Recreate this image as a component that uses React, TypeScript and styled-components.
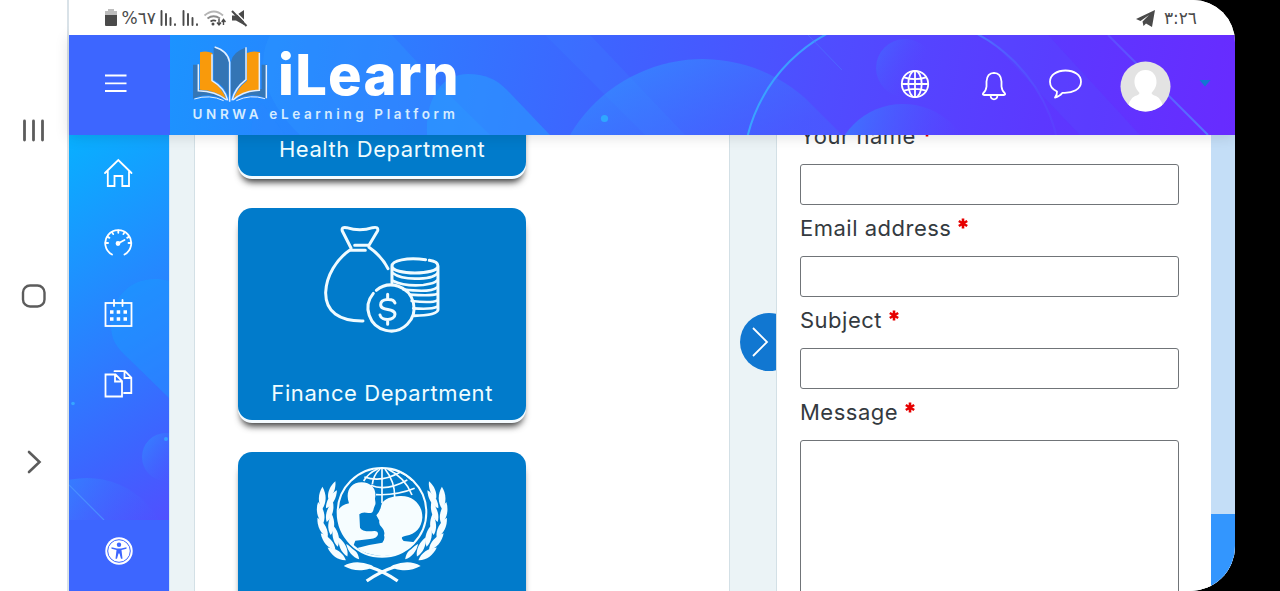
import React from "react";
import styled, { createGlobalStyle } from "styled-components";

const Global = createGlobalStyle`
  * { box-sizing: border-box; }
  html, body { margin: 0; background: #000; }
  body { font-family: Inter, "Liberation Sans", sans-serif; overflow: hidden; }
`;

const Screen = styled.div`
  display: flex;
  width: 1235px;
  height: 591px;
  background: #fff;
  border-radius: 0 42px 45px 0;
  overflow: hidden;
`;

const SystemNav = styled.nav`
  flex: 0 0 69px;
  height: 591px;
  padding-top: 118px;
  display: flex;
  flex-direction: column;
  align-items: center;
  gap: 140px;
  border-right: 2px solid #d9e2e8;
  svg { flex: none; display: block; }
`;

const Main = styled.div`
  flex: 1;
  display: flex;
  flex-direction: column;
  min-width: 0;
`;

const StatusBar = styled.div`
  position: relative;
  z-index: 3;
  background: #fff;
  flex: 0 0 35px;
  display: flex;
  justify-content: space-between;
  align-items: center;
  padding: 1px 38px 0 36px;
  color: #4a4a4a;
`;

const StatusGroup = styled.div<{ $gap: number }>`
  display: flex;
  align-items: center;
  gap: ${(p) => p.$gap}px;
  svg { display: block; }
`;

const StatusText = styled.bdo<{ $spacing?: number }>`
  font: 17px/20px "DejaVu Sans", sans-serif;
  letter-spacing: ${(p) => p.$spacing ?? 0}px;
`;

const Header = styled.header`
  flex: 0 0 100px;
  display: flex;
  position: relative;
  z-index: 2;
  box-shadow: 0 2px 14px rgba(0, 0, 0, 0.12);
`;

const MenuButton = styled.div`
  flex: 0 0 101px;
  background: #3d66ff;
  padding: 38.500px 0 0 36px;
`;

const HeaderBar = styled.div`
  flex: 1;
  position: relative;
  display: flex;
  justify-content: space-between;
  overflow: hidden;
  background: linear-gradient(100deg, #1c93ff 0%, #2f7bff 22%, #3f62ff 42%, #504cff 62%, #5c38ff 82%, #682bff 100%);
`;

const Art = styled.svg`
  position: absolute;
  inset: 0;
`;

const Brand = styled.div`
  position: relative;
  padding: 8px 0 0 21px;
  color: #fff;
`;

const BrandRow = styled.div`
  display: flex;
  height: 61px;
  svg { display: block; }
`;

const BrandName = styled.div`
  font-size: 56px;
  font-weight: 800;
  line-height: 61px;
  letter-spacing: 1.3px;
  margin: 2px 0 0 5px;
`;

const BrandTag = styled.div`
  font-size: 13.5px;
  line-height: 14px;
  font-weight: 600;
  letter-spacing: 3.62px;
  color: #d6ecff;
  margin: 3px 0 0 1.5px;
  white-space: nowrap;
`;

const Actions = styled.div`
  position: relative;
  display: flex;
  align-items: flex-start;
  padding: 25.500px 24px 0 0;
  svg { display: block; }
`;

const Action = styled.div<{ $w: number; $top?: number }>`
  width: ${(p) => p.$w}px;
  padding-top: ${(p) => p.$top ?? 0}px;
`;

const Body = styled.div`
  flex: 1;
  display: flex;
  min-height: 0;
`;

const Sidebar = styled.aside`
  flex: 0 0 101px;
  display: flex;
  flex-direction: column;
  border-right: 1px solid #cfe6f8;
`;

const SideLinks = styled.div`
  position: relative;
  height: 385px;
  background: linear-gradient(148deg, #08b0ff 0%, #1c94ff 30%, #2c7dff 54%, #3c65ff 78%, #5050ff 100%);
`;

const SideList = styled.div`
  position: relative;
  display: flex;
  flex-direction: column;
  gap: 40px;
  padding: 23px 0 0 34px;
  svg { display: block; }
`;

const Accessibility = styled.div`
  flex: 1;
  background: #3d66ff;
  padding: 17px 0 0 36px;
`;

const Content = styled.main`
  flex: 1;
  display: flex;
  min-width: 0;
  background: #ebf3f6;
  padding-left: 24px;
`;

const Departments = styled.section`
  flex: 0 0 536px;
  height: 456px;
  overflow: hidden;
  background: #fff;
  border: solid #d3e0e6;
  border-width: 0 1px;
  padding: 0 0 0 43.4px;
`;

const DepartmentList = styled.div`
  margin-top: -171px;
  display: flex;
  flex-direction: column;
  gap: 32px;
`;

const DepartmentCard = styled.div`
  flex: none;
  width: 287.5px;
  height: 212px;
  border-radius: 14px;
  background: #017bcb;
  box-shadow: 0 3px 0 #f4fbff, 0 9px 7px -3px rgba(0, 0, 0, 0.8);
  color: #f0fdff;
  display: flex;
  flex-direction: column;
  justify-content: space-between;
  align-items: center;
  svg { display: block; }
`;

const DepartmentName = styled.div`
  font-size: 22px;
  line-height: 28px;
  letter-spacing: 0.58px;
  padding-bottom: 13.500px;
  white-space: nowrap;
`;

const DepartmentIcon = styled.div<{ $top: number }>`
  padding-top: ${(p) => p.$top}px;
`;

const Gutter = styled.div`
  flex: 1;
  min-width: 0;
  padding: 178px 0 0 9.5px;
  overflow: hidden;
`;

const DrawerToggle = styled.div`
  width: 58px;
  height: 58px;
  border-radius: 50%;
  background: #1177d1;
  padding: 14px 0 0 12px;
  svg { display: block; }
`;

const ContactPanel = styled.section`
  flex: 0 0 435px;
  height: 456px;
  overflow: hidden;
  background: #fff;
  border-left: 1px solid #d3e0e6;
  padding: 0 32px 0 23px;
`;

const ContactForm = styled.form`
  margin-top: -22px;
`;

const Label = styled.label`
  display: flex;
  height: 51px;
  padding-top: 8px;
  font-size: 22px;
  line-height: 30px;
  letter-spacing: 0.5px;
  color: #343a40;
`;

const Required = styled.span`
  color: #e60000;
  padding: 5px 0 0 6.5px;
  svg { display: block; }
`;

const fieldBase = `
  display: block;
  width: 379px;
  border: 1px solid #707478;
  border-radius: 3px;
  background: #fff;
  outline: none;
  padding: 0 10px;
  resize: none;
`;
const Input = styled.input`${fieldBase} height: 41px;`;
const Textarea = styled.textarea`${fieldBase} height: 220px;`;

const ScrollTrack = styled.div`
  flex: 0 0 24px;
  background: #c4def7;
  padding-top: 379px;
`;
const ScrollThumb = styled.div`
  height: 77px;
  background: #3396fe;
`;

const HeaderArt = () => (
  <Art width="1065" height="100" viewBox="170 35 1065 100" fill="none">
    <defs>
      <linearGradient id="dome" x1="0" y1="0" x2="1" y2="0.6">
        <stop offset="0" stopColor="#2fa0ff" stopOpacity=".65" />
        <stop offset="1" stopColor="#3f70ff" stopOpacity=".3" />
      </linearGradient>
      <linearGradient id="fade" x1="0" y1="0" x2="1" y2=".6">
        <stop offset="0" stopColor="#338cff" stopOpacity=".4" />
        <stop offset=".75" stopColor="#4a5cff" stopOpacity="0" />
      </linearGradient>
      <linearGradient id="lowDome" x1="0" y1="0" x2="1" y2=".3">
        <stop offset="0" stopColor="#338cff" stopOpacity=".75" />
        <stop offset=".9" stopColor="#4a5cff" stopOpacity="0" />
      </linearGradient>
      <linearGradient id="ring" x1="743" y1="0" x2="1062" y2="0" gradientUnits="userSpaceOnUse">
        <stop offset="0" stopColor="#38a6ff" />
        <stop offset=".7" stopColor="#4a80ff" />
        <stop offset="1" stopColor="#5a48ff" stopOpacity=".3" />
      </linearGradient>
      <linearGradient id="ray" x1="1108" y1="35" x2="1208" y2="135" gradientUnits="userSpaceOnUse">
        <stop offset="0" stopColor="#5c64ff" stopOpacity=".5" />
        <stop offset="1" stopColor="#5575ff" />
      </linearGradient>
    </defs>
    <path d="M270 35 C256 62 262 98 300 135 H490 L430 76 L392 35Z" fill="#2f9bff" fillOpacity=".3" />
    <path d="M427 135 C425 98 442 74 468 74 C485 74 496 79 507 90 L550 135Z" fill="#2a9dff" fillOpacity=".55" />
    <path d="M252 135 C250 122 254 111 262 103 L285 135Z" fill="#2a86ff" fillOpacity=".4" />
    <path d="M545 35 L645 135 H685 L590 35Z" fill="#3c8cff" fillOpacity=".18" />
    <path d="M570 135 A154 154 0 0 1 805 98 L842 135Z" fill="url(#dome)" />
    <circle cx="604.5" cy="118.5" r="3.6" fill="#2fa7ff" />
    <circle cx="902" cy="174" r="159" stroke="url(#ring)" strokeWidth="2" />
    <path d="M808 35 L842 70" stroke="#4d75ff" strokeOpacity=".6" />
    <circle cx="905" cy="68" r="29" fill="url(#fade)" />
    <circle cx="903" cy="174" r="70" fill="url(#lowDome)" />
    <path d="M985 35 H1048 L1140 135 H1080Z" fill="#4e5cff" fillOpacity=".18" />
    <path d="M1108 35 L1208 135" stroke="url(#ray)" strokeWidth="2" />
  </Art>
);

const SidebarArt = () => (
  <Art width="100" height="385" viewBox="69 135 100 385" fill="none">
    <defs>
      <linearGradient id="sideFade" x1="0" y1="0" x2="1" y2=".7">
        <stop offset="0" stopColor="#3097ff" stopOpacity=".65" />
        <stop offset=".85" stopColor="#4560ff" stopOpacity="0" />
      </linearGradient>
      <linearGradient id="sideDome" x1="69" y1="478" x2="150" y2="520" gradientUnits="userSpaceOnUse">
        <stop offset="0" stopColor="#3097ff" stopOpacity=".45" />
        <stop offset="1" stopColor="#4560ff" stopOpacity=".1" />
      </linearGradient>
    </defs>
    <path d="M170 281 C135 272 111 295 111 325 C111 340 117 348 128 358 L170 399Z" fill="#18a0ff" fillOpacity=".38" />
    <circle cx="166" cy="457" r="24" fill="url(#sideFade)" />
    <circle cx="166" cy="439" r="2" fill="#379dff" />
    <circle cx="73" cy="403.500" r="1.8" fill="#36a5ff" />
    <circle cx="87" cy="560" r="82" fill="url(#sideDome)" />
    <path d="M69 485 L104 520" stroke="#4c95ff" strokeWidth="1.2" strokeOpacity=".8" />
  </Art>
);

const BookLogo = () => (
  <svg width="82" height="61" viewBox="34 22 246 183">
    <path d="M40 87 H58 V160 Q100 165 132 190 Q80 168 40 190Z" fill="#3576b5" />
    <path d="M262 87 H246 V160 Q205 165 170 190 Q222 168 262 190Z" fill="#3576b5" />
    <path d="M61 50 Q80 44 98 52 V135 Q128 158 140 190 Q108 164 61 162Z" fill="#f99a0b" />
    <path d="M241 50 Q220 44 202 52 V135 Q172 158 161 190 Q194 164 241 162Z" fill="#f99a0b" />
    <path d="M102 35 Q143 50 147 78 V185 Q135 150 102 132Z" fill="#3475b5" />
    <path d="M200 35 Q158 50 154 78 V185 Q166 150 200 132Z" fill="#3475b5" />
    <g fill="none" stroke="#e3efff" strokeWidth="4.500">
      <path d="M56 86 V165 Q108 166 141 193" />
      <path d="M260 88 V188" />
      <path d="M239 52 V164 Q190 166 160 193" />
      <path d="M97 56 V135 Q135 157 144 194" />
      <path d="M105 34 Q145 46 150 80 V198" />
      <path d="M199 35 V132 Q166 157 157 194" />
      <path d="M44 190 Q90 175 132 195 M256 189 Q212 175 170 195" strokeWidth="3" />
    </g>
  </svg>
);

const MoneyIcon = () => (
  <svg width="123.300" height="116.700" viewBox="270 270 370 350" fill="none" stroke="#f0fbff" strokeWidth="9" strokeLinecap="round" strokeLinejoin="round">
    <path d="M363 354 L337 303 Q333 290 350 293 Q390 306 428 293 Q446 289 443 302 L417 346 H374 M363 361 H406 M417 352 Q456 379 474 416" />
    <path d="M360 360 C320 387 289 437 287 487 C286 545 328 574 399 573" />
    <path d="M439 481 A69 69 0 1 1 430 490" />
    <path d="M495 519 C490 504 452 505 452 524 C452 545 495 532 495 553 C495 573 454 573 450 555 M473 493 V505 M473 571 V583" />
    <path d="M587 389 C530 382 486 391 486 408 C486 436 624 436 624 408 C624 398 612 393 598 391 M486 408 V458 M624 408 V540 Q620 556 553 557" />
    <path d="M488 429 Q510 446 555 446 Q610 446 622 430 M488 452 Q525 470 580 465 Q615 461 622 451 M520 478 Q600 489 622 472 M540 494 Q606 498 622 492 M545 513 Q606 520 622 511 M550 535 Q606 539 622 530" strokeWidth="8" />
  </svg>
);

const leafPath = "M0 -35 C13 -14 14 14 0 32 C-14 14 -13 -14 0 -35Z";
const leafAngles = [-13, 1, 15, 29, 43];
const LaurelHalf = () => (
  <g>
    <path d={leafPath} transform="translate(80 106) rotate(22) scale(.75 .85)" />
    {leafAngles.map((a) => {
      const t = (a * Math.PI) / 180;
      const s = ((a - 1) * Math.PI) / 180;
      return (
        <React.Fragment key={a}>
          <path d={leafPath} transform={`translate(${231 - 184 * Math.cos(t)} ${172 + 184 * Math.sin(t)}) rotate(${-a - 12})`} />
          <path d={leafPath} transform={`translate(${231 - 157 * Math.cos(s)} ${172 + 157 * Math.sin(s)}) rotate(${-a + 18}) scale(.88 .95)`} />
        </React.Fragment>
      );
    })}
    <path d={leafPath} transform="translate(144 291) rotate(-40) scale(.8 .9)" />
    <path d="M116 333 Q150 312 198 330 Q218 338 176 345 Q145 349 116 333Z" />
    <path d="M185 378 Q225 350 268 336" fill="none" stroke="#f6fdff" strokeWidth="10" />
  </g>
);

const EmblemIcon = () => (
  <svg width="155" height="136" viewBox="0 0 465 408" fill="#f6fdff">
    <LaurelHalf />
    <g transform="translate(463 0) scale(-1 1)"><LaurelHalf /></g>
    <circle cx="231" cy="172" r="141" fill="#017bcb" />
    <circle cx="231" cy="172" r="133" fill="none" stroke="#f6fdff" strokeWidth="6" />
    <g fill="none" stroke="#f6fdff" strokeWidth="5">
      <path d="M231 40 V145 M218 42 Q190 54 176 78 M225 42 Q205 60 202 88 M240 42 Q270 80 269 126 M248 42 Q300 67 321 120 M253 42 Q290 46 322 76" />
      <path d="M178 66 Q230 84 285 52 M197 91 Q245 110 307 75 M213 119 Q275 122 329 100" />
    </g>
    <path d="M132 145 C120 112 135 82 170 82 C201 82 216 105 210 130 C210 140 214 145 209 153 C203 165 208 176 190 174 Q172 169 163 178 L165 218 Q170 230 200 229 Q220 225 219 238 Q217 250 195 252 L151 257 L145 272 Q98 235 97 170 Q105 151 132 145Z" />
    <path d="M229 150 C236 129 263 124 285 123 C326 121 353 151 352 188 C350 218 331 238 303 242 Q282 245 296 258 L331 262 Q292 308 222 302 Q175 296 157 279 Q194 268 232 263 Q241 254 237 241 Q241 229 232 219 Q220 210 223 197 L214 181 Q226 168 229 150Z" />
  </svg>
);

const lineIcon = { fill: "none", stroke: "#fff", strokeWidth: 1.8, strokeLinecap: "round" as const, strokeLinejoin: "round" as const };

const Star = () => (
  <Required>
    <svg width="10" height="11" viewBox="0 0 10 11" stroke="currentColor" strokeWidth="2.600">
      <path d="M5 .5V10.500M.8 3L9.200 8M9.200 3L.8 8" />
    </svg>
  </Required>
);

const Signal = () => (
  <svg width="17" height="16" viewBox="0 0 17 16" stroke="currentColor" strokeWidth="1.900" strokeLinecap="round">
    <path d="M1.500 1V15M6 4V15M10.500 8V15M15 14.300V15" />
  </svg>
);

const ticks = [-180, -150, -120, -90, -60, -30, 0];

const App = () => (
  <>
    <Global />
    <Screen>
      <SystemNav>
        <svg width="24" height="25" viewBox="0 0 24 25" stroke="#5c5c5c" strokeWidth="2.800" strokeLinecap="round">
          <path d="M2.500 3V22M11.500 3V22M20.500 3V22" />
        </svg>
        <svg width="26" height="26" viewBox="0 0 26 26" fill="none" stroke="#5c5c5c" strokeWidth="2.400">
          <rect x="2" y="2.500" width="21.500" height="21" rx="7" />
        </svg>
        <svg width="24" height="26" viewBox="0 0 24 26" fill="none" stroke="#5c5c5c" strokeWidth="2.600" strokeLinecap="round">
          <path d="M7 3L17.500 13L7 23" />
        </svg>
      </SystemNav>
      <Main>
        <StatusBar>
          <StatusGroup $gap={4.500}>
            <svg width="12" height="18" viewBox="0 0 12 18">
              <path d="M3 0H9V2H12V6H0V2H3Z" fill="#bdbdbd" />
              <path d="M0 6H12V16Q12 17 11 17H1Q0 17 0 16Z" fill="#4a4a4a" />
            </svg>
            <StatusText dir="ltr" $spacing={-0.2}>%٦٧</StatusText>
            <Signal />
            <Signal />
            <svg width="23" height="17" viewBox="0 0 23 17" fill="none" strokeWidth="1.800">
              <path d="M1.500 5.500Q11 -2.500 20 5.500" stroke="#b5b5b5" />
              <path d="M4.500 8.500Q10.500 4 17 8.500" stroke="#8a8a8a" />
              <path d="M7.500 11.500Q10.500 9.500 13 11" stroke="#4a4a4a" />
              <circle cx="10" cy="14" r="1.500" fill="#4a4a4a" />
              <path d="M16 9V14M14 12.500L16 15L18 12.500M20.500 15V10M18.700 12L20.500 9.500L22.500 12" stroke="#4a4a4a" strokeWidth="1.400" />
            </svg>
            <svg width="17" height="18" viewBox="0 0 17 18">
              <path d="M1 6.500H5L13 1V16L5 11.500H1Z" fill="#4a4a4a" />
              <path d="M2.500 1L16 14.500" stroke="#fff" strokeWidth="1.500" />
              <path d="M1 2L15.500 17" stroke="#4a4a4a" strokeWidth="2" />
            </svg>
          </StatusGroup>
          <StatusGroup $gap={8}>
            <svg width="20" height="17" viewBox="0 0 20 17" fill="#4a4a4a">
              <path d="M0 9L19 0L16 17L10 13.500L7.500 16L6.500 11.500L13 5L4.500 11Z" />
            </svg>
            <StatusText dir="ltr" $spacing={-1.2}>٣:٢٦</StatusText>
          </StatusGroup>
        </StatusBar>
        <Header>
          <MenuButton>
            <svg width="22" height="19" viewBox="0 0 22 19" stroke="#fff" strokeWidth="1.800">
              <path d="M0 1.500H21.500M0 9.300H21.500M0 17H21.500" />
            </svg>
          </MenuButton>
          <HeaderBar>
            <HeaderArt />
            <Brand>
              <BrandRow>
                <BookLogo />
                <BrandName>iLearn</BrandName>
              </BrandRow>
              <BrandTag>UNRWA eLearning Platform</BrandTag>
            </Brand>
            <Actions>
              <Action $w={80} $top={8.500}>
                <svg width="30" height="30" viewBox="0 0 30 30" {...lineIcon}>
                  <circle cx="15" cy="15" r="13.200" />
                  <ellipse cx="15" cy="15" rx="6.700" ry="13.200" />
                  <path d="M15 1.800V28.200M1.800 15H28.200M4 8.300Q15 12 26 8.300M4 21.700Q15 18 26 21.700" />
                </svg>
              </Action>
              <Action $w={69} $top={10.500}>
                <svg width="28" height="30" viewBox="0 0 28 30" {...lineIcon}>
                  <path d="M3 22.500Q6 20 6.500 15.500V10.500Q7 2 14 1.800Q21 2 21.500 10.500V15.500Q22 20 25 22.500Q25.500 24 24 24H4Q2.500 24 3 22.500Z" />
                  <path d="M10.500 24.500Q11 28.300 14 28.300Q17 28.300 17.500 24.500" />
                </svg>
              </Action>
              <Action $w={71} $top={7}>
                <svg width="34" height="32" viewBox="1 0 34 32" {...lineIcon}>
                  <path d="M17.500 2.500C9 2.500 2 7 2 13.800C2 18 4.500 21.500 9 23.500Q9.300 26.500 7 29.500Q11.500 28.700 14.500 24.800C25 25.500 33 21 33 13.800C33 7 26 2.500 17.500 2.500Z" />
                </svg>
              </Action>
              <Action $w={79}>
                <svg width="51" height="51" viewBox="0 0 51 51">
                  <defs><clipPath id="avatar"><circle cx="25.500" cy="25.500" r="25" /></clipPath></defs>
                  <g clipPath="url(#avatar)">
                    <rect width="51" height="51" fill="#e3e3e3" />
                    <path d="M25.500 9C33 9 37 15 36.500 22C36 27 33 30 31.500 32Q32 34 36 35Q43 38 43 51H8Q8 38 15 35Q19 34 19.500 32C18 30 15 27 14.500 22C14 15 18 9 25.500 9Z" fill="#fff" />
                  </g>
                </svg>
              </Action>
              <Action $w={12} $top={19}>
                <svg width="12" height="7" viewBox="0 0 12 7" fill="#1177d1"><path d="M.5 0H11.500L6 6.500Z" /></svg>
              </Action>
            </Actions>
          </HeaderBar>
        </Header>
        <Body>
          <Sidebar>
            <SideLinks>
              <SidebarArt />
              <SideList>
                <svg width="30" height="30" viewBox="0 0 30 30" {...lineIcon} strokeLinejoin="miter">
                  <path d="M2 15L15.300 2L28.500 15M4.800 13V28H11.500V18H19.300V28H26V13" />
                </svg>
                <svg width="30" height="31" viewBox="0 0 30 31" {...lineIcon}>
                  <path d="M9 26.500A13 13 0 1 1 21.500 26.500M16 15L21.500 12" />
                  {ticks.map((a) => <path key={a} d="M25.500 15H28" transform={`rotate(${a} 15.300 15)`} />)}
                  <circle cx="15" cy="15.500" r="1.500" fill="#fff" />
                </svg>
                <svg width="30" height="30" viewBox="0 0 30 30" {...lineIcon} strokeLinejoin="miter">
                  <rect x="2.500" y="4" width="26" height="23" />
                  <path d="M11 1V7M19.500 1V7" />
                  <path d="M7 13H10.500M13.700 13H17.200M20.500 13H24M7 20H10.500M13.700 20H17.200M20.500 20H24" strokeWidth="3.500" strokeLinecap="butt" />
                </svg>
                <svg width="30" height="30" viewBox="0 0 30 30" {...lineIcon} strokeLinejoin="miter">
                  <path d="M2.500 5.500H12.500L19 12V27.500H2.500ZM12 5.500V12.500H19M11.500 2.200H22L28.300 8.500V24H21M21.500 2.500V9H28" />
                </svg>
              </SideList>
            </SideLinks>
            <Accessibility>
              <svg width="28" height="28" viewBox="0 0 28 28">
                <circle cx="14" cy="14" r="13.700" fill="#fff" />
                <circle cx="14" cy="14" r="11.300" fill="none" stroke="#3d66ff" />
                <circle cx="14" cy="7.700" r="2.200" fill="#3d66ff" />
                <path d="M6.500 10.300L12 11.500H16L21.500 10.300V11.700L16.500 13L17.500 21.700H16L14.500 16.500H13.500L12 21.700H10.500L11.500 13L6.500 11.700Z" fill="#3d66ff" />
              </svg>
            </Accessibility>
          </Sidebar>
          <Content>
            <Departments>
              <DepartmentList>
                <DepartmentCard>
                  <DepartmentIcon $top={0} />
                  <DepartmentName>Health Department</DepartmentName>
                </DepartmentCard>
                <DepartmentCard>
                  <DepartmentIcon $top={12}><MoneyIcon /></DepartmentIcon>
                  <DepartmentName>Finance Department</DepartmentName>
                </DepartmentCard>
                <DepartmentCard>
                  <DepartmentIcon $top={3}><EmblemIcon /></DepartmentIcon>
                </DepartmentCard>
              </DepartmentList>
            </Departments>
            <Gutter>
              <DrawerToggle>
                <svg width="18" height="30" viewBox="0 0 18 30" fill="none" stroke="#fff" strokeWidth="1.800">
                  <path d="M1 1L15 15L1 29" />
                </svg>
              </DrawerToggle>
            </Gutter>
            <ContactPanel>
              <ContactForm>
                <Label>Your name <Star /></Label>
                <Input />
                <Label>Email address <Star /></Label>
                <Input />
                <Label>Subject <Star /></Label>
                <Input />
                <Label>Message <Star /></Label>
                <Textarea />
              </ContactForm>
            </ContactPanel>
            <ScrollTrack><ScrollThumb /></ScrollTrack>
          </Content>
        </Body>
      </Main>
    </Screen>
  </>
);

export default App;
